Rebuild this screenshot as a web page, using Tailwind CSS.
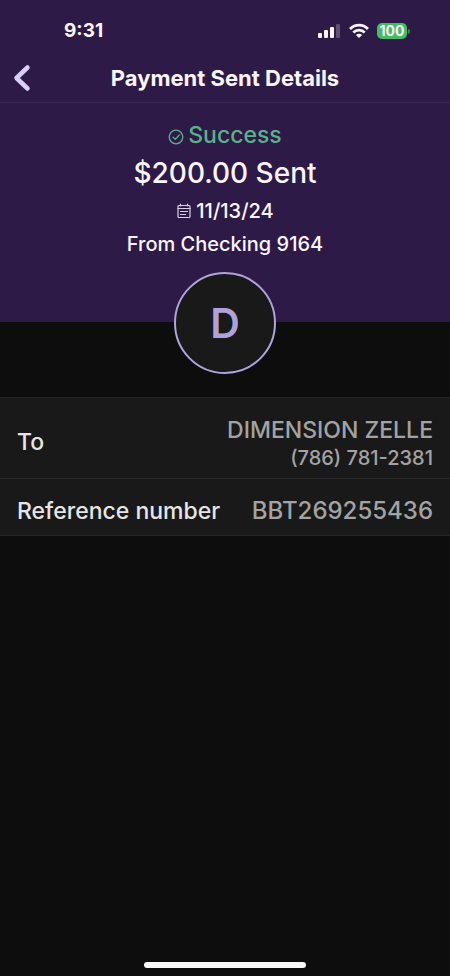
<!DOCTYPE html>
<html lang="en">
<head>
<meta charset="utf-8">
<meta name="viewport" content="width=device-width, initial-scale=1">
<title>Payment Sent Details</title>
<script src="https://cdn.jsdelivr.net/npm/@tailwindcss/browser@4"></script>
</head>
<body class="flex min-h-screen flex-col bg-[#0d0d0d] font-['Inter',sans-serif] text-[#faf5fc]">
  <header class="bg-[#2e1a47]">
    <div class="flex h-[54px] items-center justify-between pt-2 pr-10 pl-16">
      <span class="text-[19px] leading-6 font-bold">9:31</span>
      <div class="flex items-center gap-2">
        <svg class="h-4 w-6" viewBox="0 0 24 16" role="img" aria-label="Signal">
          <g fill="currentColor"><rect x="1" y="10" width="4" height="5" rx="1"/><rect x="7" y="7" width="4" height="8" rx="1"/><rect x="13" y="4" width="4" height="11" rx="1"/><rect x="19" y="1" width="4" height="14" rx="1" opacity=".25"/></g>
        </svg>
        <svg class="h-4 w-5" viewBox="0 0 20 16" role="img" aria-label="Wi-Fi">
          <g fill="none" stroke="currentColor" stroke-width="2.8"><path d="M1 6C6 .8 14 .8 19 6"/><path d="M4.300 9.500c3.200-3.200 8.200-3.200 11.400 0"/></g>
          <path d="M10 15l-3.100-3.100c1.800-1.700 4.400-1.700 6.200 0z" fill="currentColor"/>
        </svg>
        <div class="flex items-center gap-px">
          <span class="flex h-4 w-[30px] items-center justify-center rounded-[5px] bg-[#43bd62] text-[14px] leading-4 font-bold">100</span>
          <span class="h-[5px] w-[2px] rounded-r-full bg-[#3c7d5c]"></span>
        </div>
      </div>
    </div>
    <nav class="grid h-[49px] grid-cols-[1fr_auto_1fr] items-center border-b border-[#3a2950] px-3">
      <button type="button" aria-label="Back" class="w-5 text-[#d8d0f8]">
        <svg class="h-7 w-5" viewBox="0 0 20 28" fill="none" stroke="currentColor" stroke-width="4.500" stroke-linecap="round" stroke-linejoin="round"><path d="M15.500 3.500L4.500 14l11 10.500"/></svg>
      </button>
      <h1 class="text-[22px] leading-7 font-bold">Payment Sent Details</h1>
    </nav>
    <section class="flex flex-col items-center pt-4">
      <p class="flex items-center gap-1 text-[23px] leading-8 font-medium text-[#59b389]">
        <svg class="mt-1 h-4 w-4" viewBox="0 0 16 16" fill="none" stroke="currentColor" stroke-width="1.300" stroke-linecap="round" stroke-linejoin="round"><circle cx="8" cy="8" r="6.800"/><path d="M5 8.300l2.200 2.100L11.300 6"/></svg>
        Success
      </p>
      <p class="mt-1 text-[28px] leading-9 font-medium">$200.00 Sent</p>
      <p class="mt-1 flex items-center gap-1 text-[20px] leading-8 font-medium">
        <svg class="h-4 w-4 text-[#d9cfe6]" viewBox="0 0 16 16" fill="none" stroke="currentColor" stroke-width="1.200" stroke-linecap="round" stroke-linejoin="round"><rect x="2" y="2.500" width="12" height="12" rx="1"/><path d="M2 5.500h12M4.500 1v2M11.500 1v2M4.500 8.500h7M4.500 11.500h5"/></svg>
        11/13/24
      </p>
      <p class="mt-px text-[20px] leading-8 font-medium">From Checking 9164</p>
      <div class="mt-3 -mb-[52px] flex size-[102px] items-center justify-center rounded-full border-2 border-[#b1a4dc] bg-[#191919] text-[41px] leading-none font-semibold text-[#afa2dc]">D</div>
    </section>
  </header>
  <main class="mt-[75px] grow">
    <dl class="divide-y divide-[#2b2b2b] border-y border-[#252525] bg-[#191919] text-[23px] leading-8 font-medium">
      <div class="flex items-center justify-between px-[17px] pt-4 pb-2">
        <dt class="text-[#e6e6e6]">To</dt>
        <dd class="text-right text-[#a3a3a3]">
          <p>DIMENSION ZELLE</p>
          <p class="text-[20px] leading-6">(786) 781-2381</p>
        </dd>
      </div>
      <div class="flex items-center justify-between px-[17px] pt-4 pb-2">
        <dt class="text-[#e6e6e6]">Reference number</dt>
        <dd class="text-[24px] text-[#a3a3a3]">BBT269255436</dd>
      </div>
    </dl>
  </main>
  <footer class="flex justify-center pb-2">
    <div class="h-[6px] w-[36%] rounded-full bg-[#f8f8f8]"></div>
  </footer>
</body>
</html>
